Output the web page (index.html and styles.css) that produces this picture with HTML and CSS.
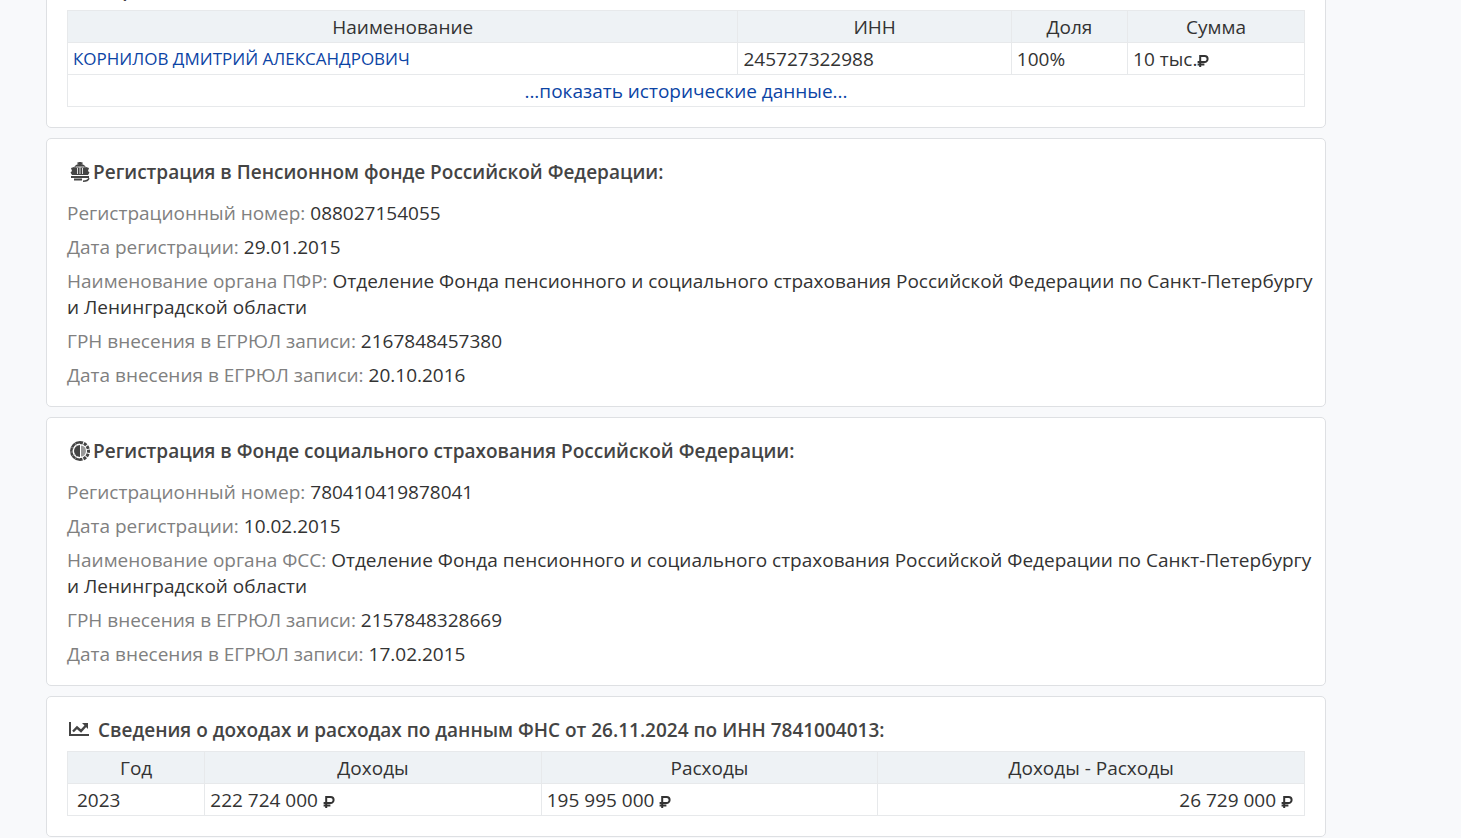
FILE: index.html
```html
<!DOCTYPE html>
<html lang="ru">
<head>
<meta charset="utf-8">
<title>Сведения об организации</title>
<link rel="stylesheet" href="styles.css">
</head>
<body>
<svg class="defs" aria-hidden="true">
  <symbol id="ruble" viewBox="0 0 12 12"><path d="M3.2 12V1H7.600a2.900 2.900 0 0 1 0 6H.6M.6 9.400H7.400" fill="none" stroke="currentColor" stroke-width="2"/></symbol>
</svg>
<main class="page">
  <section class="card">
    <h2 class="title"><svg class="icon icon-wide" viewBox="0 0 22 20" aria-hidden="true"><circle cx="11" cy="6" r="4" fill="currentColor"/><path d="M3 18a8 7 0 0 1 16 0z" fill="currentColor"/></svg>Учредители:</h2>
    <table class="grid founders">
      <thead><tr><th class="c-name">Наименование</th><th class="c-inn">ИНН</th><th class="c-share">Доля</th><th>Сумма</th></tr></thead>
      <tbody>
        <tr><td><a class="person" href="#">КОРНИЛОВ ДМИТРИЙ АЛЕКСАНДРОВИЧ</a></td><td>245727322988</td><td>100%</td><td>10 тыс.<svg class="rub"><use href="#ruble"/></svg></td></tr>
        <tr><td class="center" colspan="4"><a href="#">...показать исторические данные...</a></td></tr>
      </tbody>
    </table>
  </section>

  <section class="card facts-card">
    <h2 class="title"><svg class="icon" viewBox="0 0 22 20" aria-hidden="true">
      <g fill="none" stroke="currentColor">
        <path d="M11 0v3M8.500 1.200h5" stroke-width="2"/>
        <path d="M5 6Q6 2 11 2T17 6V13H5z" fill="currentColor" stroke="none"/>
        <path d="M2 6l3-1 1 8H3L1.500 10.500l1.500-1.500zM20 6l-3-1-1 8h3l1.500-2.500-1.500-1.500z" fill="currentColor" stroke="none"/>
        <path d="M8.500 6v6M11 5v7M13.500 6v6M6.500 5h9" stroke="#ddd" stroke-width="1"/>
        <path d="M2 15h18M5 17.500h8" stroke-width="1.800"/>
        <path d="M14 19.200q5 0 6-3" stroke-width="1.500"/>
      </g></svg>Регистрация в Пенсионном фонде Российской Федерации:</h2>
    <div class="facts">
      <p><span class="label">Регистрационный номер:</span> 088027154055</p>
      <p><span class="label">Дата регистрации:</span> 29.01.2015</p>
      <p><span class="label">Наименование органа ПФР:</span> Отделение Фонда пенсионного и социального страхования Российской Федерации по Санкт-Петербургу и Ленинградской области</p>
      <p><span class="label">ГРН внесения в ЕГРЮЛ записи:</span> 2167848457380</p>
      <p><span class="label">Дата внесения в ЕГРЮЛ записи:</span> 20.10.2016</p>
    </div>
  </section>

  <section class="card facts-card">
    <h2 class="title"><svg class="icon" viewBox="0 0 22 20" aria-hidden="true">
      <path d="M11 0A10 10 0 1 0 11 20V17.500A7.500 7.500 0 0 1 11 2.500z" fill="currentColor"/>
      <path d="M11 4a6 6 0 0 0 0 12z" fill="currentColor"/>
      <path d="M12 4.500a5 5.500 0 0 1 0 11z" fill="#999"/>
      <path d="M11 1.500a8.500 8.500 0 0 1 0 17" fill="none" stroke="currentColor" stroke-width="3" stroke-dasharray="3 1"/>
      <path d="M2 6l3 1.500M1 11h3M3 15l3-2M6 2l2 3M6 18l2-3" stroke="#aaa" stroke-width="0.700"/>
      </svg>Регистрация в Фонде социального страхования Российской Федерации:</h2>
    <div class="facts">
      <p><span class="label">Регистрационный номер:</span> 780410419878041</p>
      <p><span class="label">Дата регистрации:</span> 10.02.2015</p>
      <p><span class="label">Наименование органа ФСС:</span> Отделение Фонда пенсионного и социального страхования Российской Федерации по Санкт-Петербургу и Ленинградской области</p>
      <p><span class="label">ГРН внесения в ЕГРЮЛ записи:</span> 2157848328669</p>
      <p><span class="label">Дата внесения в ЕГРЮЛ записи:</span> 17.02.2015</p>
    </div>
  </section>

  <section class="card">
    <h2 class="title"><svg class="icon icon-wide" viewBox="0 0 22 20" aria-hidden="true">
      <path d="M2 2v13h19" fill="none" stroke="currentColor" stroke-width="2"/>
      <path d="M5 11.500l4-4 4 3.500 5-5.500" fill="none" stroke="currentColor" stroke-width="2.400"/>
      <path d="M14 3h6v6z" fill="currentColor"/></svg>Сведения о доходах и расходах по данным ФНС от 26.11.2024 по ИНН 7841004013:</h2>
    <table class="grid finance">
      <thead><tr><th class="c-year">Год</th><th class="c-sum">Доходы</th><th class="c-sum">Расходы</th><th>Доходы - Расходы</th></tr></thead>
      <tbody>
        <tr><td class="year">2023</td><td>222 724 000 <svg class="rub"><use href="#ruble"/></svg></td><td>195 995 000 <svg class="rub"><use href="#ruble"/></svg></td><td class="right">26 729 000 <svg class="rub"><use href="#ruble"/></svg></td></tr>
      </tbody>
    </table>
  </section>
</main>
</body>
</html>
```
FILE: styles.css
```css
* { box-sizing: border-box; }
body {
  margin: 0;
  background: #f8f9fb;
  color: #333;
  font: 19px/26px "Open Sans", "Noto Sans", sans-serif;
  overflow: hidden;
}
.defs { display: none; }
.page {
  display: flex;
  flex-direction: column;
  gap: 10px;
  margin-top: -45px;
  padding: 0 135px 0 46px;
}
.card {
  padding: 20px;
  background: #fff;
  border: 1px solid #dee0e3;
  border-radius: 5px;
}
.facts-card { padding-right: 8px; padding-bottom: 18px; }
.title {
  display: flex;
  align-items: center;
  margin: 0 0 8px;
  color: #444;
  font-size: 19px;
  line-height: 26px;
  font-weight: 600;
}
.facts-card .title { margin-bottom: 15px; }
.icon { flex: none; width: 22px; height: 20px; margin: 0 2px; }
.icon-wide { margin: 0 8px 0 1px; }
.facts { display: flex; flex-direction: column; gap: 8px; }
.facts p { margin: 0; }
.label { color: #808080; }
.grid { width: 100%; table-layout: fixed; border-collapse: collapse; }
.grid th, .grid td {
  height: 32px;
  padding: 2px 5px;
  border: 1px solid #e7e9eb;
  text-align: left;
  font-weight: 400;
}
.grid th { background: #eef2f5; text-align: center; }
.grid .center { text-align: center; }
.grid .right { padding-right: 11px; text-align: right; }
.grid .year { padding-left: 9px; }
.c-name { width: 54.2%; }
.c-inn { width: 22.1%; }
.c-share { width: 9.4%; }
.c-year { width: 11.1%; }
.c-sum { width: 27.2%; }
a { color: #0b44a5; text-decoration: none; }
.person { display: block; font-size: 17px; line-height: 24px; }
.rub { width: 12px; height: 12px; vertical-align: -1px; }
```
